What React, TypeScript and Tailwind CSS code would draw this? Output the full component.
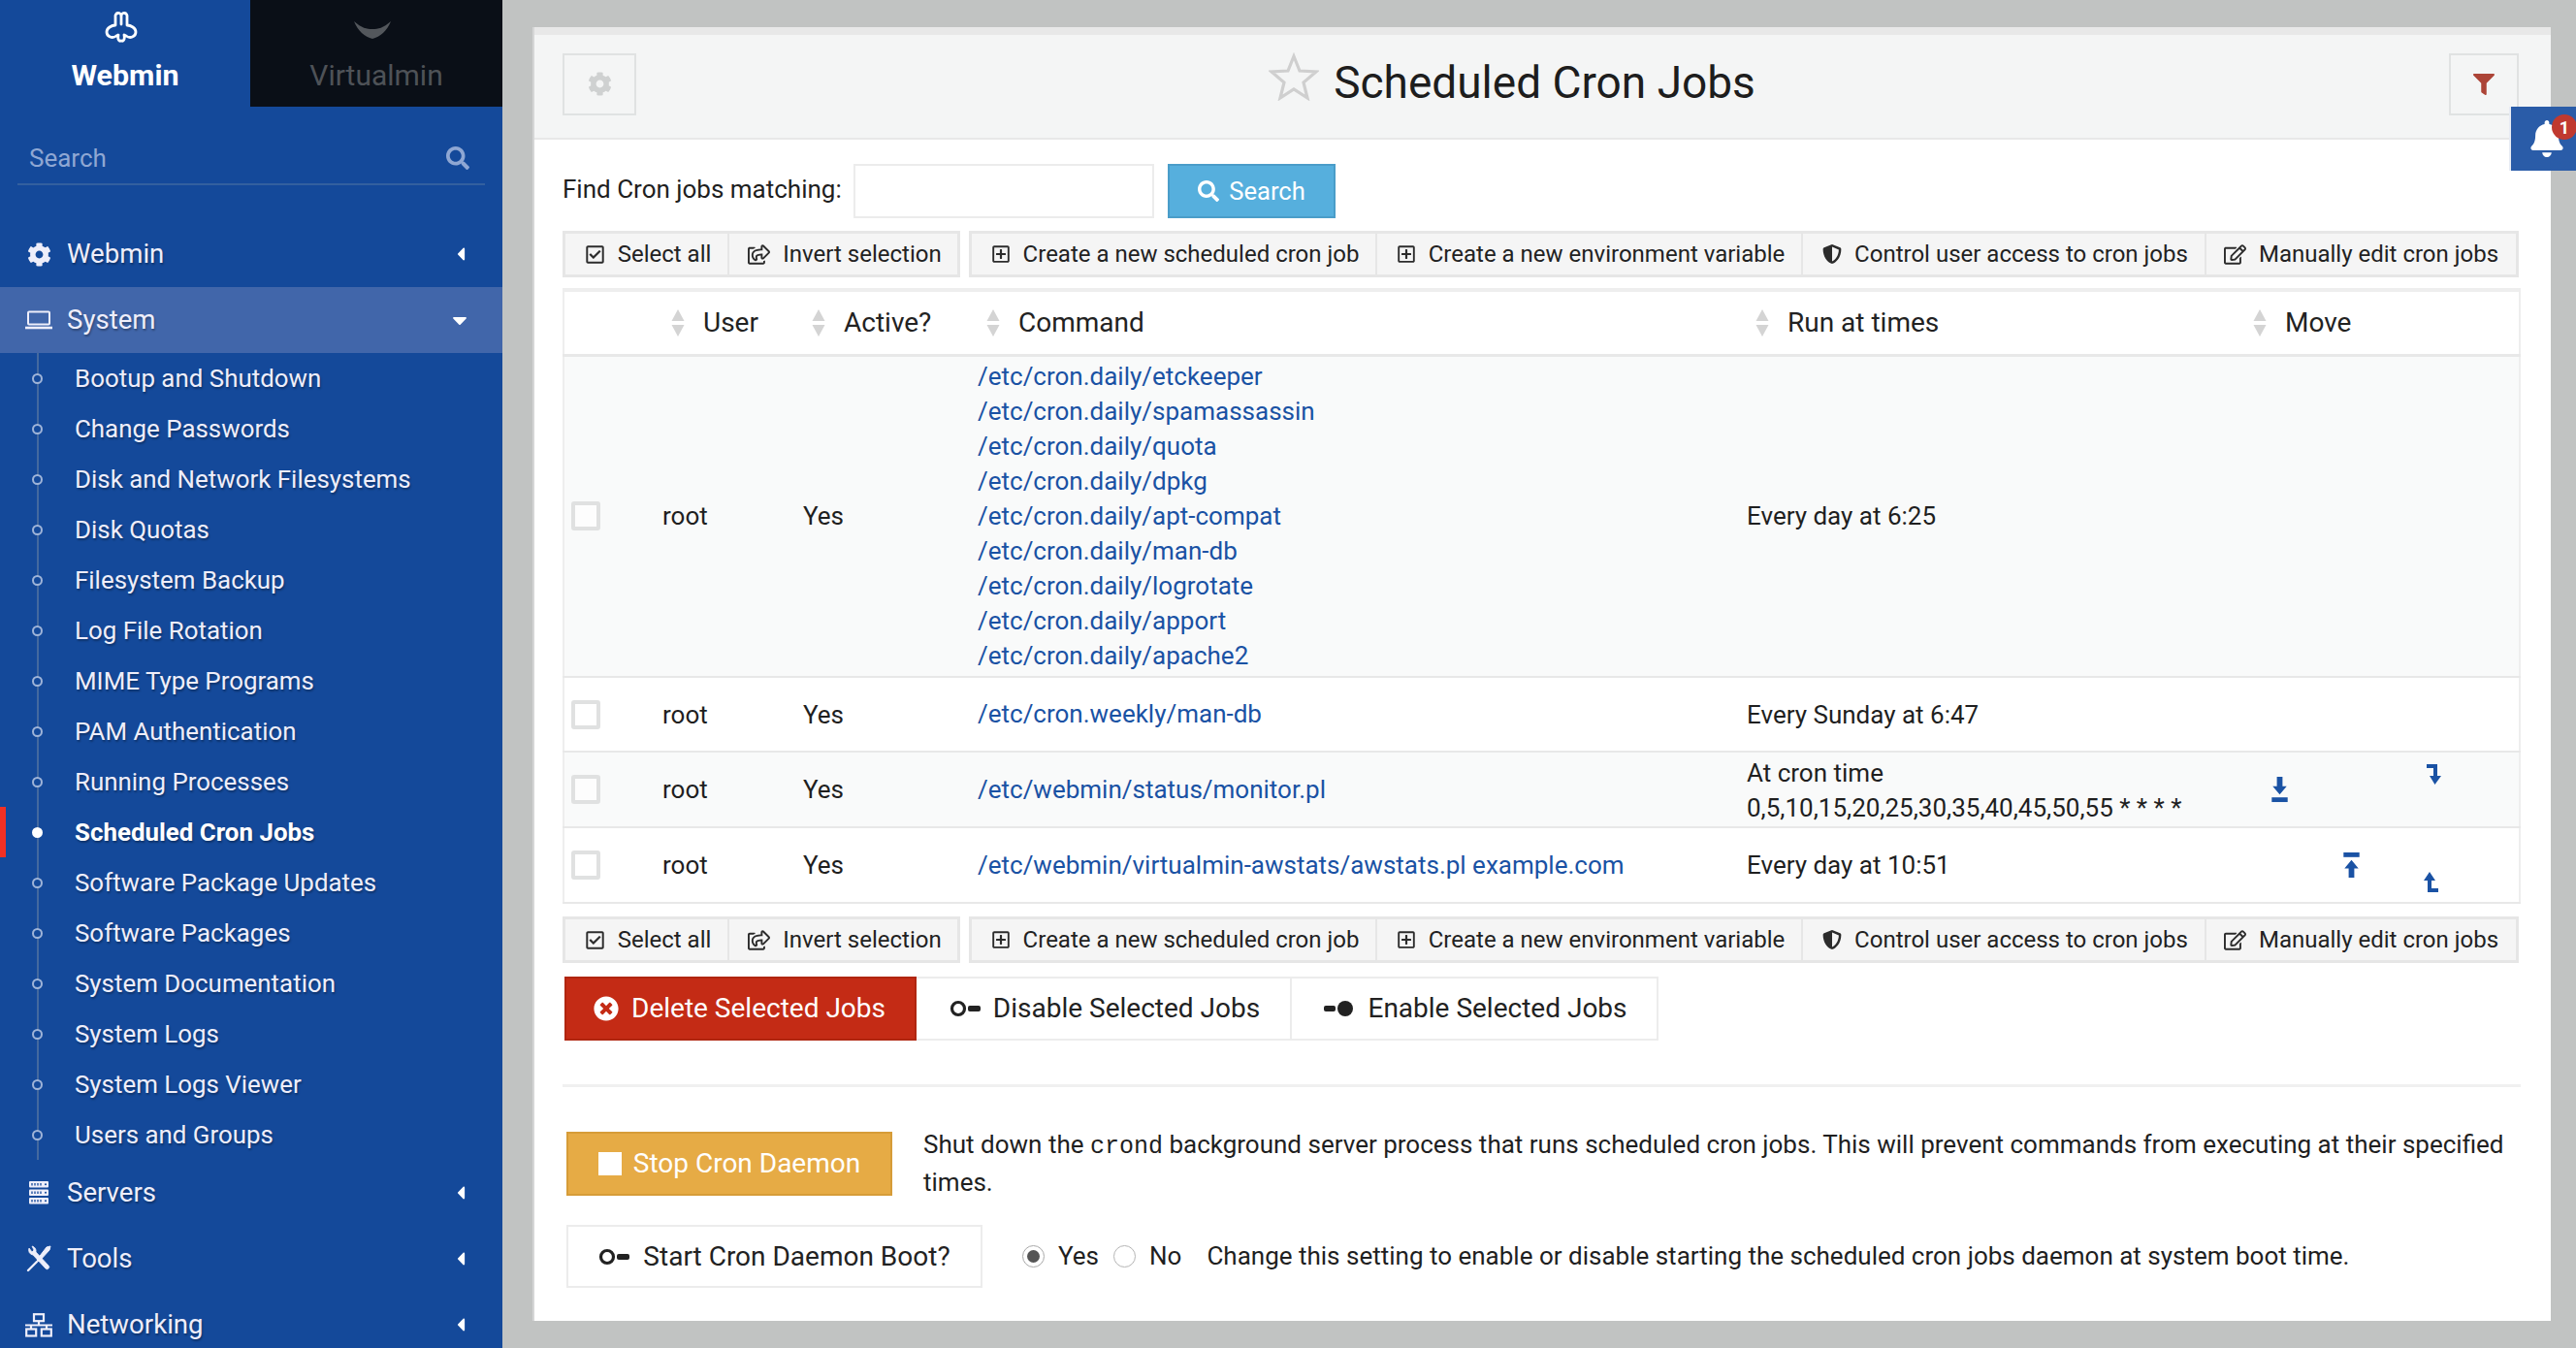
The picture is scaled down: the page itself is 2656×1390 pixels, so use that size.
import React from 'react';
import { FaCog, FaSearch, FaFilter, FaRegCheckSquare, FaRegShareSquare, FaRegPlusSquare, FaShieldAlt, FaRegEdit, FaTimesCircle, FaBell, FaCaretLeft, FaCaretDown } from 'react-icons/fa';

const sub = ['Bootup and Shutdown','Change Passwords','Disk and Network Filesystems','Disk Quotas','Filesystem Backup','Log File Rotation','MIME Type Programs','PAM Authentication','Running Processes','Scheduled Cron Jobs','Software Package Updates','Software Packages','System Documentation','System Logs','System Logs Viewer','Users and Groups'];
const cmds = ['/etc/cron.daily/etckeeper','/etc/cron.daily/spamassassin','/etc/cron.daily/quota','/etc/cron.daily/dpkg','/etc/cron.daily/apt-compat','/etc/cron.daily/man-db','/etc/cron.daily/logrotate','/etc/cron.daily/apport','/etc/cron.daily/apache2'];

function Logo() {
  return (
    <svg viewBox="0 0 34 33" className="mr-[8px] h-[33px] w-[34px]" fill="none" stroke="#fff" strokeWidth="2.8" strokeLinejoin="round" strokeLinecap="round">
      <path d="M11 14 V5 a3 3 0 0 1 6 -1 a3 3 0 0 1 6 1 V14 C27 14 32 17 32 21 C32 26 26 28 22 25 L20 24 C21 29 19 31 17 30 C15 31 13 29 14 24 L12 25 C8 28 2 26 2 21 C2 17 7 14 11 14 Z" />
      <path d="M17 5 V13" />
    </svg>
  );
}

function MainItem({ icon, label, active }: { icon: React.ReactNode; label: string; active?: boolean }) {
  return (
    <div className={`flex h-[68px] items-center pr-[35px] ${active ? 'bg-[#4166aa]' : ''}`}>
      <span className="ml-[26px] mr-[15px] flex w-[28px] justify-center text-[#eeeefa]">{icon}</span>
      <span className="flex-1 text-[27.6px] text-[#eeeefa] [text-shadow:1px_2px_2px_rgba(0,0,0,0.3)]">{label}</span>
      {active ? <FaCaretDown className="mr-[-3px] h-[24px] w-[24px] text-white" /> : <FaCaretLeft className="h-[22px] w-[16px] text-white" />}
    </div>
  );
}

function Laptop() {
  return (
    <svg viewBox="0 0 28 20" className="h-[20px] w-[28px]" fill="none" stroke="#eeeefa" strokeWidth="2">
      <rect x="3" y="1.5" width="22" height="13" rx="1" />
      <path d="M0 18h28" strokeWidth="2.6" />
    </svg>
  );
}

function Servers() {
  return (
    <svg viewBox="0 0 20 24" className="h-[24px] w-[20px]" fill="#eeeefa">
      {[0, 8.5, 17].map((y) => (
        <g key={y}>
          <rect x="0" y={y} width="20" height="6.5" rx="1" />
          <path d={`M3 ${y + 2}v2.5M6 ${y + 2}v2.5M9 ${y + 2}v2.5M12 ${y + 2}v2.5`} stroke="#14499a" strokeWidth="1.3" />
          <circle cx="17" cy={y + 3.2} r="1" fill="#14499a" />
        </g>
      ))}
    </svg>
  );
}

function Tools() {
  return (
    <svg viewBox="0 0 26 28" className="h-[28px] w-[26px]" fill="none" stroke="#eeeefa">
      <path d="M25 1 L21 2 L11 15 L13 17 L24 5 Z" fill="#eeeefa" strokeWidth="1" />
      <path d="M2 26 L11 17" strokeWidth="2.4" strokeLinecap="round" />
      <path d="M3 3 a5 5 0 0 0 4 7 L20 24 a2 2 0 0 0 3 -3 L10 7 a5 5 0 0 0 -4 -6 L8 5 L6 7 Z" fill="#eeeefa" strokeWidth="0.8" />
    </svg>
  );
}

function Network() {
  return (
    <svg viewBox="0 0 28 25" className="h-[25px] w-[28px]" fill="none" stroke="#eeeefa" strokeWidth="2.2">
      <rect x="9" y="1.2" width="10" height="7" />
      <rect x="1.2" y="16.5" width="10" height="7" />
      <rect x="16.8" y="16.5" width="10" height="7" />
      <path d="M14 8v4M0 12.5h28M6 12.5v4M22 12.5v4" />
    </svg>
  );
}

function Toggle({ on }: { on?: boolean }) {
  const c = '#222';
  return on ? (
    <svg viewBox="0 0 32 18" className="h-[18px] w-[32px]"><rect x="0" y="6" width="12" height="6" rx="2" fill={c} /><circle cx="22" cy="9" r="8" fill={c} /></svg>
  ) : (
    <svg viewBox="0 0 32 18" className="h-[18px] w-[32px]"><circle cx="9" cy="9" r="6.5" fill="none" stroke={c} strokeWidth="3.2" /><rect x="19" y="6" width="13" height="6" rx="2" fill={c} /></svg>
  );
}

function TB({ icon, label, w, last }: { icon: React.ReactNode; label: string; w: string; last?: boolean }) {
  return (
    <div className={`flex h-full items-center justify-center gap-[13px] text-[24px] text-[#222] ${w} ${last ? '' : 'border-r-2 border-[#e6e6e6] pl-[3px]'}`}>
      <span className="text-[#2c2c2c]">{icon}</span>
      <span>{label}</span>
    </div>
  );
}

function Toolbar() {
  const box = 'flex h-[48px] items-stretch border-[3px] border-[#e6e6e6] bg-[#f5f5f5]';
  return (
    <div className="flex gap-[9px]">
      <div className={`${box} w-[410px]`}>
        <TB w="w-[169px]" icon={<FaRegCheckSquare className="h-[21px] w-[21px]" />} label="Select all" />
        <TB w="flex-1 pl-[3px]" last icon={<FaRegShareSquare className="h-[21px] w-[23px]" />} label="Invert selection" />
      </div>
      <div className={`${box} w-[1598px]`}>
        <TB w="w-[418px]" icon={<FaRegPlusSquare className="h-[20px] w-[20px]" />} label="Create a new scheduled cron job" />
        <TB w="w-[439px]" icon={<FaRegPlusSquare className="h-[20px] w-[20px]" />} label="Create a new environment variable" />
        <TB w="w-[416px]" icon={<FaShieldAlt className="h-[22px] w-[20px]" />} label="Control user access to cron jobs" />
        <TB w="flex-1" last icon={<FaRegEdit className="h-[21px] w-[23px]" />} label="Manually edit cron jobs" />
      </div>
    </div>
  );
}

function Sort() {
  return (
    <svg viewBox="0 0 14 28" className="h-[28px] w-[14px]" fill="#d4d4d4">
      <path d="M7 0 L13.5 12 H0.5 Z" />
      <path d="M7 28 L13.5 16 H0.5 Z" />
    </svg>
  );
}

const link = 'text-[#1a52a4]';

function Check() {
  return <span className="block h-[30px] w-[30px] rounded-[3px] border-[4px] border-[#e0e1e1] bg-white/60" />;
}

function Row({ cmd, time, alt, h, move }: { cmd: React.ReactNode; time: React.ReactNode; alt?: boolean; h: string; move?: React.ReactNode }) {
  return (
    <tr className={`border-b-2 border-[#e8e8e8] ${alt ? 'bg-[#f9fafa]' : 'bg-white'} ${h}`}>
      <td className="pl-[7px]"><Check /></td>
      <td className="pl-[16px] pt-[1px]">root</td>
      <td className="pl-[16px] pt-[1px]">Yes</td>
      <td className="pl-[16px]">{cmd}</td>
      <td className="pl-[16px] pt-[1px]">{time}</td>
      <td className="p-0">{move}</td>
    </tr>
  );
}

const Top = () => <svg viewBox="0 0 17 28" className="h-[27px] w-[17px]" fill="#1a52a4"><rect x="0" y="0" width="17" height="5" /><path d="M8.5 8 L16 17 H11.5 V27 H5.5 V17 H1 Z" /></svg>;
const Bottom = () => <svg viewBox="0 0 17 28" className="h-[27px] w-[17px]" fill="#1a52a4"><rect x="0" y="22" width="17" height="5" /><path d="M5.5 0 H11.5 V10 H16 L8.5 19 L1 10 H5.5 Z" /></svg>;
const DownHook = () => <svg viewBox="0 0 15 21" className="h-[21px] w-[15px]" fill="#1a52a4"><path d="M0 0 H11 V12 H15 L8.5 21 L3 12 H7 V4 H0 Z" /></svg>;
const UpHook = () => <svg viewBox="0 0 15 21" className="h-[21px] w-[15px]" fill="#1a52a4"><path d="M15 21 H4 V9 H0 L6 0 L12 9 H8 V17 H15 Z" /></svg>;

function Head({ label, pl }: { label: string; pl: string }) {
  return (
    <th className={`font-normal ${pl}`}>
      <div className="flex items-center gap-[19px] text-left text-[28px] text-[#222]"><Sort /><span>{label}</span></div>
    </th>
  );
}

function Action({ icon, label, w, cls }: { icon: React.ReactNode; label: string; w: string; cls: string }) {
  return (
    <div className={`flex h-full items-center justify-center gap-[13px] text-[28px] ${w} ${cls}`}>{icon}<span>{label}</span></div>
  );
}

export default function App() {
  return (
    <div className="relative flex h-[1390px] w-[2656px] overflow-hidden bg-[#c1c3c2] text-[26px] text-[#1f1f1f] [font-family:Roboto,'Liberation_Sans',sans-serif]">
      <aside className="h-[1390px] w-[518px] shrink-0 overflow-hidden bg-[#14499a]">
        <div className="flex h-[110px]">
          <div className="flex w-[258px] flex-col items-center pt-[12px]">
            <Logo />
            <span className="mt-[15px] text-[30.4px] font-bold leading-[36px] text-white">Webmin</span>
          </div>
          <div className="flex flex-1 flex-col items-center bg-[#0a0f17] pt-[22px]">
            <svg viewBox="0 0 38 18" className="mr-[8px] h-[18px] w-[38px]" fill="#53575c"><path d="M0 0 C8 7 13 8 19 8 C25 8 30 7 38 0 C34 10 27 16 19 18 C11 16 4 10 0 0 Z" /></svg>
            <span className="mt-[20px] text-[30px] leading-[36px] text-[#4e5257]">Virtualmin</span>
          </div>
        </div>
        <div className="mx-[18px] mt-[27px] flex h-[54px] items-center justify-between border-b-2 border-[#33609f] pl-[12px] pr-[16px] text-[26px] text-[#8fa7d3]">
          <span>Search</span>
          <FaSearch className="h-[24px] w-[24px]" />
        </div>
        <div className="mt-[37px]">
          <MainItem icon={<FaCog className="h-[25px] w-[25px]" />} label="Webmin" />
          <MainItem icon={<Laptop />} label="System" active />
          <ul className="ml-[38px] border-l-2 border-[#44699f]">
            {sub.map((s) => {
              const cur = s === 'Scheduled Cron Jobs';
              return (
                <li key={s} className={`relative flex h-[52px] items-center pl-[37px] text-[25.9px] [text-shadow:1px_2px_2px_rgba(0,0,0,0.3)] ${cur ? 'font-bold text-white' : 'text-[#eeeefa]'}`}>
                  <span className={`absolute left-[-7px] top-[21px] h-[11px] w-[11px] rounded-full border-2 ${cur ? 'border-white bg-white' : 'border-[#9fb4d8] bg-[#14499a]'}`} />
                  {cur && <span className="absolute left-[-40px] top-0 h-[52px] w-[6px] bg-[#f23024]" />}
                  {s}
                </li>
              );
            })}
          </ul>
          <MainItem icon={<Servers />} label="Servers" />
          <MainItem icon={<Tools />} label="Tools" />
          <MainItem icon={<Network />} label="Networking" />
        </div>
      </aside>

      <main className="flex-1 pb-[28px] pl-[31px] pr-[28px] pt-[28px]">
        <div className="h-[1334px] border-l-[2px] border-[#d5d6d6] bg-white">
          <div className="flex h-[116px] items-center border-b-2 border-t-[8px] border-[#e8e8e8] bg-[#f4f5f5] pb-[5px] pl-[29px] pr-[33px]">
            <div className="flex h-[64px] w-[76px] items-center justify-center border-2 border-[#e0e2e2]">
              <FaCog className="h-[25px] w-[25px] text-[#cfd1d1]" />
            </div>
            <div className="flex flex-1 items-center justify-center gap-[15px] pr-[63px]">
              <svg viewBox="0 0 52 50" className="mb-[15px] h-[50px] w-[52px]" fill="none" stroke="#cfcfcf" strokeWidth="3.2" strokeLinejoin="miter">
                <path d="M26 4 L32 19 L49 20 L36 31 L40 47 L26 38 L12 47 L16 31 L3 20 L20 19 Z" />
              </svg>
              <span className="mb-[4px] text-[46px] leading-none text-[#1d1d1d]">Scheduled Cron Jobs</span>
            </div>
            <div className="flex h-[64px] w-[72px] items-center justify-center border-2 border-[#e0e2e2]">
              <FaFilter className="h-[22px] w-[22px] text-[#ac4437]" />
            </div>
          </div>
          <div className="pl-[29px] pr-[31px] pt-[25px]">
            <div className="flex h-[56px] items-center">
              <span className="w-[300px] pb-[3px]">Find Cron jobs matching:</span>
              <div className="h-[56px] w-[310px] border-2 border-[#ececec]" />
              <div className="ml-[14px] flex h-[56px] w-[173px] items-center justify-center gap-[10px] border-2 border-[#4a9dc9] bg-[#56afdd] text-[25.6px] text-white">
                <FaSearch className="h-[22px] w-[22px]" /><span>Search</span>
              </div>
            </div>
            <div className="mt-[13px]"><Toolbar /></div>
            <table className="mt-[11px] w-[2017px] table-fixed border-collapse border-l-2 border-r-2 border-t-4 border-[#eeeeee]">
              <colgroup>
                <col className="w-[86px]" /><col className="w-[145px]" /><col className="w-[180px]" /><col className="w-[793px]" /><col className="w-[515px]" /><col className="w-[298px]" />
              </colgroup>
              <thead>
                <tr className="h-[67px] border-b-[3px] border-[#e8e8e8]">
                  <th />
                  <Head label="User" pl="pl-[25px]" />
                  <Head label="Active?" pl="pl-[25px]" />
                  <Head label="Command" pl="pl-[25px]" />
                  <Head label="Run at times" pl="pl-[25px]" />
                  <Head label="Move" pl="pl-[23px]" />
                </tr>
              </thead>
              <tbody>
                <Row alt h="h-[332px]" cmd={<div className="leading-[36px]">{cmds.map((c) => <div key={c} className={link}>{c}</div>)}</div>} time="Every day at 6:25" />
                <Row h="h-[77px]" cmd={<span className={link}>/etc/cron.weekly/man-db</span>} time="Every Sunday at 6:47" />
                <Row alt h="h-[78px]" cmd={<span className={link}>/etc/webmin/status/monitor.pl</span>}
                  time={<div className="leading-[36px]">At cron time<br />0,5,10,15,20,25,30,35,40,45,50,55 * * * *</div>}
                  move={<div className="flex h-[76px] items-center pl-[42px]"><Bottom /><span className="mb-[32px] ml-[143px]"><DownHook /></span></div>} />
                <Row h="h-[78px]" cmd={<span className={link}>/etc/webmin/virtualmin-awstats/awstats.pl example.com</span>} time="Every day at 10:51"
                  move={<div className="flex h-[76px] items-center pl-[116px]"><Top /><span className="ml-[66px] mt-[34px]"><UpHook /></span></div>} />
              </tbody>
            </table>
            <div className="mt-[13px]"><Toolbar /></div>
            <div className="mt-[14px] flex h-[66px] w-[1130px] pl-[2px]">
              <Action w="w-[363px]" cls="bg-[#c42b15] text-white border-2 border-[#b02610] pr-[2px]" icon={<FaTimesCircle className="h-[26px] w-[26px]" />} label="Delete Selected Jobs" />
              <Action w="w-[387px]" cls="border-y-2 border-r-2 border-[#ececec] pl-[3px] text-[#222]" icon={<Toggle />} label="Disable Selected Jobs" />
              <Action w="w-[378px]" cls="border-y-2 border-r-2 border-[#ececec] pl-[3px] text-[#222]" icon={<Toggle on />} label="Enable Selected Jobs" />
            </div>
            <div className="mt-[45px] h-[3px] bg-[#f0f0f0]" />
            <div className="mt-[41px] flex items-center">
              <div className="ml-[4px] flex h-[66px] w-[336px] shrink-0 items-center justify-center gap-[12px] border-2 border-[#d69c38] bg-[#e6ab45] text-[28px] text-white">
                <span className="h-[24px] w-[24px] bg-white" /><span>Stop Cron Daemon</span>
              </div>
              <p className="ml-[32px] leading-[37px]">
                Shut down the <span className="text-[25px] [font-family:'Liberation_Mono',monospace]">crond</span> background server process that runs scheduled cron jobs. This will prevent commands from executing at their specified times.
              </p>
            </div>
            <div className="mt-[25px] flex items-center">
              <div className="ml-[4px] flex h-[65px] w-[429px] items-center justify-center gap-[14px] border-2 border-[#ececec] text-[28px] text-[#222]">
                <Toggle /><span>Start Cron Daemon Boot?</span>
              </div>
              <span className="ml-[41px] flex h-[23px] w-[23px] items-center justify-center rounded-full border-[1.5px] border-[#a9a9a9]"><span className="h-[13px] w-[13px] rounded-full bg-[#555]" /></span>
              <span className="ml-[14px]">Yes</span>
              <span className="ml-[15px] h-[23px] w-[23px] rounded-full border-[1.5px] border-[#b5b5b5]" />
              <span className="ml-[14px]">No</span>
              <span className="ml-[26px]">Change this setting to enable or disable starting the scheduled cron jobs daemon at system boot time.</span>
            </div>
          </div>
        </div>
      </main>

      <div className="absolute left-[2587px] top-[110px] flex h-[66px] w-[69px] items-center justify-center border-l-2 border-[#e8ecf4] bg-[#2a5ca8] pl-[6px]">
        <FaBell className="h-[38px] w-[36px] text-white" />
        <span className="absolute left-[42px] top-[8px] flex h-[26px] w-[26px] items-center justify-center rounded-full bg-[#c0392f] text-[18px] font-bold text-white">1</span>
      </div>
    </div>
  );
}
